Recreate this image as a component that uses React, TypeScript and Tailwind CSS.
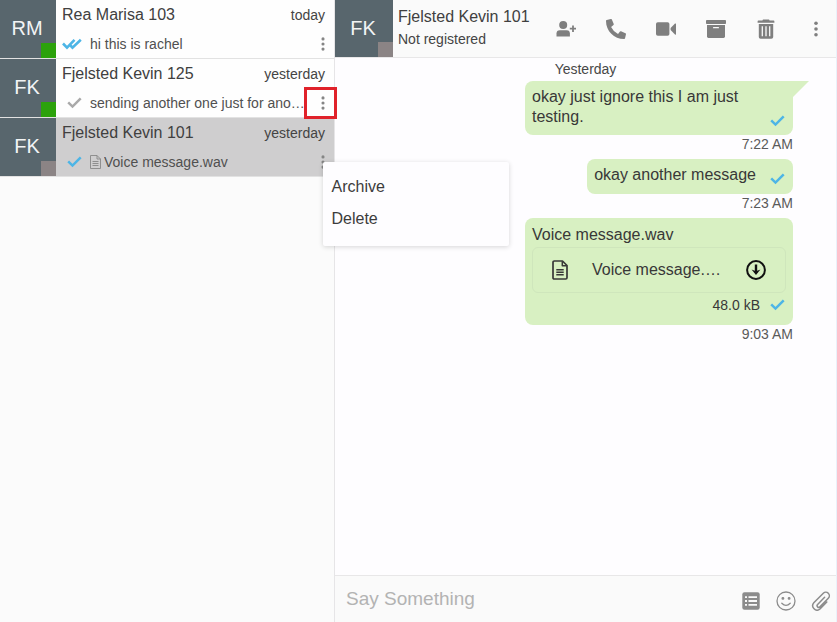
import type { ReactNode } from 'react';
import { FaPhoneAlt } from 'react-icons/fa';

type Tone = 'blue' | 'gray';

function Check({ tone = 'blue' }: { tone?: Tone }) {
  return (
    <svg viewBox="0 0 15 12" className={`h-3 w-[15px] shrink-0 ${tone === 'blue' ? 'text-[#4db5e6]' : 'text-[#a9a9a9]'}`} aria-hidden="true">
      <path d="M1.2 5.4 L5.5 9.6 L13.7 1.4" fill="none" stroke="currentColor" strokeWidth="2.5" />
    </svg>
  );
}

function DoubleCheck() {
  return (
    <svg viewBox="0 0 20 12" className="h-3 w-5 shrink-0 text-[#4db5e6]" aria-hidden="true">
      <path d="M1 5.5 L5 9.7 L12.5 1.8 M7.5 6.5 L10.5 9.7 L18.8 1.8" fill="none" stroke="currentColor" strokeWidth="2.6" />
    </svg>
  );
}

function Dots({ className }: { className: string }) {
  return (
    <svg viewBox="0 0 4 16" className={className} fill="currentColor" aria-hidden="true">
      <circle cx="2" cy="2.2" r="1.8" />
      <circle cx="2" cy="8" r="1.8" />
      <circle cx="2" cy="13.8" r="1.8" />
    </svg>
  );
}

function PageIcon({ className }: { className: string }) {
  return (
    <svg viewBox="0 0 11 14" className={className} fill="none" stroke="currentColor" aria-hidden="true">
      <path d="M0.5 0.5 H7 L10.5 4 V13.5 H0.5 Z M7 0.5 V4 H10.5 M2.5 6.5 H8.5 M2.5 8.5 H8.5 M2.5 10.5 H8.5" strokeWidth="0.9" />
    </svg>
  );
}

function FileIcon() {
  return (
    <svg viewBox="0 0 16 20" className="h-5 w-4 shrink-0" fill="none" stroke="currentColor" strokeLinejoin="round" aria-hidden="true">
      <path d="M2.3 1 H10.5 L15 5.5 V17.7 Q15 19 13.7 19 H2.3 Q1 19 1 17.7 V2.3 Q1 1 2.3 1 Z" strokeWidth="1.7" />
      <path d="M10.3 1.2 V5.7 H14.8" strokeWidth="1.5" />
      <path d="M4.3 9.7 H11.7 M4.3 12.2 H11.7 M4.3 14.7 H11.7" strokeWidth="1.6" />
    </svg>
  );
}

function DownloadIcon() {
  return (
    <svg viewBox="0 0 20 20" className="size-5" fill="none" stroke="currentColor" aria-hidden="true">
      <circle cx="10" cy="10" r="8.9" strokeWidth="2" />
      <path d="M10 4.5 V13" strokeWidth="2.4" />
      <path d="M5.6 9.4 L10 15 L14.4 9.4 L10 11.2 Z" fill="currentColor" stroke="none" />
    </svg>
  );
}

function PersonAddIcon() {
  return (
    <svg viewBox="0 0 20 16" className="h-4 w-5" fill="currentColor" aria-hidden="true">
      <circle cx="7.2" cy="4" r="4" />
      <path d="M0.5 15.6 V12.6 Q0.5 9.2 3.8 9.2 H10.6 Q13.9 9.2 13.9 12.6 V15.6 Z" />
      <path d="M17 4.5 V10.9 M13.8 7.7 H20" stroke="currentColor" strokeWidth="1.8" />
    </svg>
  );
}

function VideoIcon() {
  return (
    <svg viewBox="0 0 20 14" className="h-3.5 w-5" fill="currentColor" aria-hidden="true">
      <rect x="0" y="0.3" width="13.4" height="13.4" rx="1.8" />
      <path d="M14.6 6 L19 1.6 Q20 1 20 2 V12 Q20 13 19 12.4 L14.6 8 Z" />
    </svg>
  );
}

function ArchiveIcon() {
  return (
    <svg viewBox="0 0 20 18" className="h-[18px] w-5" fill="currentColor" aria-hidden="true">
      <rect x="0" y="0" width="20" height="4" rx="0.8" />
      <path d="M1 5 H19 V16.6 Q19 18 17.6 18 H2.4 Q1 18 1 16.6 Z" />
      <path d="M7.6 7.7 H12.4" stroke="#fafafa" strokeWidth="1.3" strokeLinecap="round" />
    </svg>
  );
}

function TrashIcon() {
  return (
    <svg viewBox="0 0 18 20" className="h-5 w-[18px]" fill="currentColor" aria-hidden="true">
      <path d="M6 0.4 H12 L12.6 1.6 H16.6 Q17.4 1.6 17.4 2.4 V3.8 H0.6 V2.4 Q0.6 1.6 1.4 1.6 H5.4 Z" />
      <path d="M1.8 5 H16.2 V18 Q16.2 19.8 14.4 19.8 H3.6 Q1.8 19.8 1.8 18 Z" />
      <path d="M5.3 7.3 V17.3 M9 7.3 V17.3 M12.7 7.3 V17.3" stroke="#fafafa" strokeWidth="1.3" />
    </svg>
  );
}

function ListIcon() {
  return (
    <svg viewBox="0 0 18 18" className="size-[18px]" aria-hidden="true">
      <rect x="0.3" y="0.3" width="17.4" height="17.4" rx="2.2" fill="currentColor" />
      <path d="M3 5.2 H5 M3 9 H5 M3 12.8 H5 M6.5 5.2 H15 M6.5 9 H15 M6.5 12.8 H15" stroke="#fafafa" strokeWidth="1.8" />
    </svg>
  );
}

function SmileIcon() {
  return (
    <svg viewBox="0 0 20 20" className="size-5" fill="none" stroke="currentColor" strokeWidth="1.3" strokeLinecap="round" aria-hidden="true">
      <circle cx="10" cy="10" r="9" />
      <path d="M5.8 12.2 Q10 16.6 14.2 12.2" />
      <circle cx="6.9" cy="7.4" r="0.8" fill="currentColor" />
      <circle cx="13.1" cy="7.4" r="0.8" fill="currentColor" />
    </svg>
  );
}

function ClipIcon() {
  return (
    <svg viewBox="0 0 20 20" className="size-5" fill="none" stroke="currentColor" strokeWidth="1.5" strokeLinecap="round" aria-hidden="true">
      <path d="M13.6 6.2 L6.6 13.6 A1.6 1.6 0 0 0 8.9 15.9 L17.3 7.2 A3.5 3.5 0 0 0 12.3 2.2 L2.8 11.8 A4.4 4.4 0 0 0 9 18 L15.8 11" />
    </svg>
  );
}

function Avatar({ initials, online, className }: { initials: string; online: boolean; className: string }) {
  return (
    <div className={`relative flex shrink-0 items-center justify-center bg-[#58666d] pr-0.5 pb-0.5 text-xl text-[#f2f4f5] ${className}`}>
      {initials}
      <span className={`absolute right-0 bottom-0 size-[15px] ${online ? 'bg-[#2ca20c]' : 'bg-[#8b8485]'}`} />
    </div>
  );
}

type Chat = {
  initials: string;
  name: string;
  when: string;
  preview: string;
  online: boolean;
  status: 'read' | 'sent' | 'delivered';
  file?: boolean;
  selected?: boolean;
  highlighted?: boolean;
};

const chats: Chat[] = [
  { initials: 'RM', name: 'Rea Marisa 103', when: 'today', preview: 'hi this is rachel', online: true, status: 'read' },
  { initials: 'FK', name: 'Fjelsted Kevin 125', when: 'yesterday', preview: 'sending another one just for ano…', online: true, status: 'sent', highlighted: true },
  { initials: 'FK', name: 'Fjelsted Kevin 101', when: 'yesterday', preview: 'Voice message.wav', online: false, status: 'delivered', file: true, selected: true },
];

function ChatMenu() {
  return (
    <div role="menu" className="absolute top-1/2 left-1/2 z-20 flex w-[186px] flex-col rounded-xs bg-[#fefdff] pt-[9px] pb-[11px] text-base text-[#3c3c3c] shadow-[0_1px_5px_rgba(0,0,0,0.16)]">
      <button role="menuitem" className="h-8 px-[9px] text-left">Archive</button>
      <button role="menuitem" className="h-8 px-[9px] text-left">Delete</button>
    </div>
  );
}

function ChatRow({ chat }: { chat: Chat }) {
  return (
    <li className={`flex h-[59px] border-b border-[#e2e2e2] ${chat.selected ? 'bg-[#cfcecf]' : 'bg-[#fefefe]'}`}>
      <Avatar initials={chat.initials} online={chat.online} className="w-14" />
      <div className="min-w-0 flex-1 pl-1.5">
        <div className="flex h-[29px] items-center justify-between pr-[9px]">
          <span className="truncate text-base text-[#404040]">{chat.name}</span>
          <span className="text-sm text-[#444]">{chat.when}</span>
        </div>
        <div className="flex h-[29px] items-center pr-1">
          <span className="mr-2 flex w-5 shrink-0 justify-end">
            {chat.status === 'read' ? <DoubleCheck /> : <Check tone={chat.status === 'sent' ? 'gray' : 'blue'} />}
          </span>
          {chat.file && <PageIcon className="mr-[3px] h-3.5 w-[11px] shrink-0 text-[#888]" />}
          <span className="min-w-0 flex-1 truncate text-sm text-[#505050]">{chat.preview}</span>
          <div className="relative shrink-0">
            <button aria-label={`Options for ${chat.name}`} className="flex h-4 w-[15px] items-center justify-center text-[#858585]">
              <Dots className="h-3.5 w-1" />
            </button>
            {chat.highlighted && <span className="absolute -top-2 -left-[11px] z-10 h-8 w-[33px] border-3 border-[#e0222a]" />}
            {chat.selected && <ChatMenu />}
          </div>
        </div>
      </div>
    </li>
  );
}

function Message({ time, tail, children }: { time: string; tail?: boolean; children: ReactNode }) {
  return (
    <li className="flex flex-col items-end">
      <div className={`relative min-h-[35px] max-w-[268px] rounded-lg bg-[#d8f0c2] px-[7px] text-base leading-5 ${tail ? 'rounded-tr-none' : ''}`}>
        {children}
        {tail && (
          <svg viewBox="0 0 16 16" className="absolute top-0 left-full size-4 text-[#d8f0c2]" fill="currentColor" aria-hidden="true">
            <path d="M0 0 H16 L0 16 Z" />
          </svg>
        )}
      </div>
      <time className="mb-1.5 text-sm leading-[18px] text-[#5a5a5a]">{time}</time>
    </li>
  );
}

function TextMessage({ text, time, tail }: { text: string; time: string; tail?: boolean }) {
  return (
    <Message time={time} tail={tail}>
      <div className="flex items-end gap-3.5 pt-1.5 pr-px pb-2">
        <p>{text}</p>
        <Check />
      </div>
    </Message>
  );
}

function ToolButton({ label, children }: { label: string; children: ReactNode }) {
  return (
    <button aria-label={label} className="flex size-6 shrink-0 items-center justify-center">
      {children}
    </button>
  );
}

export default function App() {
  return (
    <div className="flex h-screen overflow-hidden bg-[#fefdff] font-['Liberation_Sans',Arial,sans-serif] text-[#383838]">
      <aside className="w-[335px] shrink-0 border-r border-[#e6e5e7] bg-[#fbfbfb]">
        <ul>
          {chats.map((chat) => (
            <ChatRow key={chat.name} chat={chat} />
          ))}
        </ul>
      </aside>

      <main className="flex min-w-0 flex-1 flex-col border-r border-[#eaf1fa]">
        <header className="flex h-[58px] shrink-0 border-b border-[#e8e7e8] bg-[#fafafa]">
          <Avatar initials="FK" online={false} className="w-[58px]" />
          <div className="min-w-0 flex-1 pt-1.5 pl-[5px]">
            <h1 className="text-base leading-[22px] whitespace-nowrap text-[#404040]">Fjelsted Kevin 101</h1>
            <p className="text-sm leading-[22px] whitespace-nowrap text-[#444]">Not registered</p>
          </div>
          <div className="flex items-center gap-[26px] pr-2 text-[#7f7f7f]">
            <ToolButton label="Add contact"><PersonAddIcon /></ToolButton>
            <ToolButton label="Call"><FaPhoneAlt className="size-5" /></ToolButton>
            <ToolButton label="Video call"><VideoIcon /></ToolButton>
            <ToolButton label="Archive chat"><ArchiveIcon /></ToolButton>
            <ToolButton label="Delete chat"><TrashIcon /></ToolButton>
            <ToolButton label="More options"><Dots className="h-4 w-1" /></ToolButton>
          </div>
        </header>

        <section className="min-h-0 flex-1 px-[43px]">
          <p className="h-[23px] text-center text-sm leading-[23px] text-[#484848]">Yesterday</p>
          <ol>
            <TextMessage text="okay just ignore this I am just testing." time="7:22 AM" tail />
            <TextMessage text="okay another message" time="7:23 AM" />
            <Message time="9:03 AM">
              <div className="w-[254px] pt-[7px] pb-2.5">
                <p>Voice message.wav</p>
                <div className="mt-0.5 flex h-[46px] items-center rounded-md border border-[#cfe6bc] px-[19px]">
                  <FileIcon />
                  <span className="ml-6 whitespace-nowrap">Voice message.…</span>
                  <button aria-label="Download Voice message.wav" className="ml-auto text-[#111]"><DownloadIcon /></button>
                </div>
                <div className="mt-0.5 flex items-center justify-end gap-[10px] pr-px text-sm leading-5">
                  <span>48.0 kB</span>
                  <Check />
                </div>
              </div>
            </Message>
          </ol>
        </section>

        <footer className="flex h-[47px] shrink-0 items-center gap-[11px] border-t border-[#e8e7e8] bg-[#fafafa] pt-1 pr-[3px] pl-[11px] text-[#8c8c8c]">
          <input aria-label="Message" placeholder="Say Something" className="min-w-0 flex-1 bg-transparent pb-1 text-[19px] outline-none placeholder:text-[#b3b3b3]" />
          <ToolButton label="Templates"><ListIcon /></ToolButton>
          <ToolButton label="Emoji"><SmileIcon /></ToolButton>
          <ToolButton label="Attach file"><ClipIcon /></ToolButton>
        </footer>
      </main>
    </div>
  );
}
